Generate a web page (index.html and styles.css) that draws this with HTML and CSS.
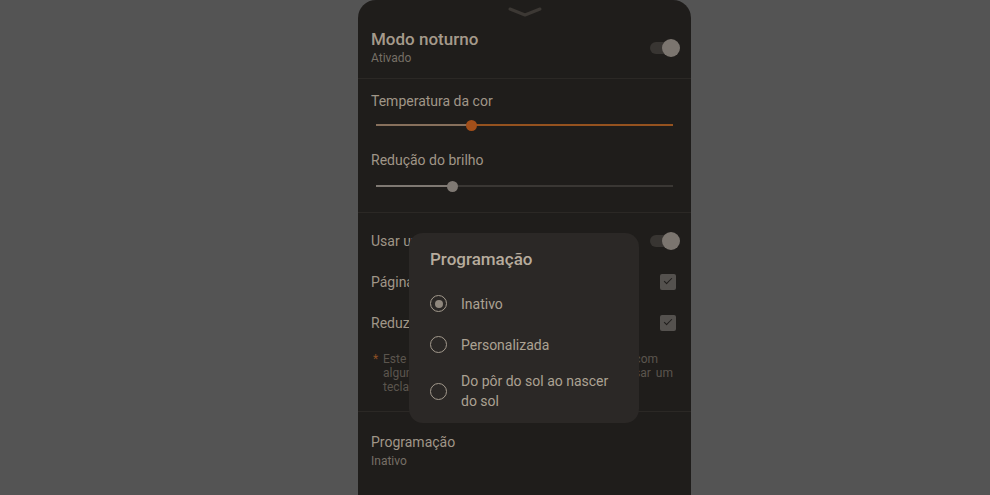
FILE: index.html
```html
<!DOCTYPE html>
<html lang="pt">
<head>
    <meta charset="UTF-8">
    <meta name="viewport" content="width=device-width, initial-scale=1.0">
    <link rel="stylesheet" href="styles.css">
    <title>Modo noturno</title>
</head>
<body>
<div class="sheet">
    <div class="handle">
        <svg width="34" height="10" viewBox="0 0 34 10">
            <polyline points="2,2 17,8 32,2" fill="none" stroke="#3c3834" stroke-width="3" stroke-linecap="round" stroke-linejoin="round"/>
        </svg>
    </div>

    <div class="head">
        <div class="text">
            <div class="title">Modo noturno</div>
            <div class="sub">Ativado</div>
        </div>
        <div class="toggle"><span class="thumb"></span></div>
    </div>

    <div class="sliders">
        <div class="label">Temperatura da cor</div>
        <div class="slider warm">
            <div class="track" style="--pos: 32.3%"><span class="knob"></span></div>
        </div>
        <div class="label gap">Redução do brilho</div>
        <div class="slider dim">
            <div class="track" style="--pos: 25.6%"><span class="knob"></span></div>
        </div>
    </div>

    <div class="options">
        <div class="row">
            <span class="label">Usar um tema escuro</span>
            <div class="toggle"><span class="thumb"></span></div>
        </div>
        <div class="row">
            <span class="label">Páginas web escuras</span>
            <span class="check"></span>
        </div>
        <div class="row">
            <span class="label">Reduzir brilho do papel de parede</span>
            <span class="check"></span>
        </div>
        <div class="note">
            <span class="star">*</span>
            <div class="note-text">
                <span class="line first">Este recurso pode não funcionar com</span>
                <span class="line">alguns aplicativos e jogos. Recomendamos usar um</span>
                <span>teclado escuro.</span>
            </div>
        </div>
    </div>

    <div class="schedule">
        <div class="title-sm">Programação</div>
        <div class="sub">Inativo</div>
    </div>

    <div class="dialog">
        <div class="dialog-title">Programação</div>
        <div class="radio-row">
            <span class="radio on"></span>
            <span>Inativo</span>
        </div>
        <div class="radio-row">
            <span class="radio"></span>
            <span>Personalizada</span>
        </div>
        <div class="radio-row last">
            <span class="radio"></span>
            <span>Do pôr do sol ao nascer<br>do sol</span>
        </div>
    </div>
</div>
</body>
</html>
```

FILE: styles.css
```css
body {
    margin: 0;
    background: #545454;
    font-family: Roboto, "Noto Sans", sans-serif;
    height: 495px;
    overflow: hidden;
}

.sheet {
    position: relative;
    width: 333px;
    height: 495px;
    margin-left: 358px;
    background: #1f1d1b;
    border-radius: 18px 18px 0 0;
}

.handle {
    height: 26px;
    display: flex;
    justify-content: center;
    padding-top: 7px;
    box-sizing: border-box;
}

.head {
    display: flex;
    align-items: center;
    justify-content: space-between;
    padding: 3px 11px 12px 13px;
    border-bottom: 1px solid #2b2825;
}

.title {
    font-size: 17px;
    line-height: 20px;
    font-weight: 500;
    color: #a59a8b;
}

.sub {
    margin-top: 1px;
    font-size: 12px;
    line-height: 16px;
    color: #766f66;
}

.toggle {
    position: relative;
    width: 28px;
    height: 12px;
    border-radius: 6px;
    background: #383532;
    margin-right: 2px;
}

.toggle .thumb {
    position: absolute;
    right: -2px;
    top: -3px;
    width: 18px;
    height: 18px;
    border-radius: 50%;
    background: #7b756f;
}

.sliders {
    padding: 12px 18px 12px 13px;
    border-bottom: 1px solid #2b2825;
}

.label {
    font-size: 14px;
    line-height: 20px;
    color: #a09688;
}

.label.gap {
    margin-top: 11px;
}

.slider {
    height: 28px;
    display: flex;
    align-items: center;
    padding-left: 5px;
}

.slider.dim {
    padding-top: 2px;
}

.track {
    position: relative;
    flex: 1;
    height: 2px;
}

.warm .track {
    background: linear-gradient(to right, #87705c var(--pos), #95521f var(--pos));
}

.dim .track {
    background: linear-gradient(to right, #7f7973 var(--pos), #3a3734 var(--pos));
}

.knob {
    position: absolute;
    left: var(--pos);
    top: -4.5px;
    width: 11px;
    height: 11px;
    margin-left: -5.5px;
    border-radius: 50%;
}

.warm .knob {
    background: #a24f1a;
}

.dim .knob {
    background: #7f7973;
}

.options {
    padding: 7px 0 17px;
    border-bottom: 1px solid #2b2825;
}

.row {
    height: 41px;
    display: flex;
    align-items: center;
    justify-content: space-between;
    padding: 0 11px 0 13px;
}

.check {
    width: 16px;
    height: 16px;
    margin-right: 4px;
    border-radius: 2px;
    background: #54514e;
    position: relative;
}

.check::after {
    content: "";
    position: absolute;
    left: 4px;
    top: 4px;
    width: 7px;
    height: 3px;
    border-left: 1.5px solid #1f1d1b;
    border-bottom: 1.5px solid #1f1d1b;
    transform: rotate(-45deg);
}

.note {
    display: flex;
    margin-top: 9px;
    padding: 0 18px 0 15px;
    font-size: 12px;
    line-height: 14px;
    color: #5b554e;
}

.star {
    width: 10px;
    flex-shrink: 0;
    color: #8c4f24;
}

.note-text {
    flex: 1;
    display: flex;
    flex-direction: column;
}

.line {
    text-align: justify;
    text-align-last: justify;
}

.line.first {
    padding-right: 15px;
}

.schedule {
    padding: 20px 13px 0;
}

.title-sm {
    font-size: 14px;
    line-height: 20px;
    color: #a09688;
}

.dialog {
    position: absolute;
    left: 51px;
    top: 233px;
    width: 230px;
    height: 190px;
    box-sizing: border-box;
    padding: 15px 0 0 21px;
    background: #2b2826;
    border-radius: 14px;
}

.dialog-title {
    font-size: 17px;
    line-height: 22px;
    font-weight: 500;
    color: #b7ac9d;
    margin-bottom: 13px;
}

.radio-row {
    height: 41px;
    display: flex;
    align-items: center;
    gap: 14px;
    font-size: 14px;
    line-height: 20px;
    color: #aca293;
}

.radio-row.last {
    height: auto;
    padding-top: 6px;
}

.radio {
    width: 17px;
    height: 17px;
    box-sizing: border-box;
    border: 1.5px solid #a39a8d;
    border-radius: 50%;
    flex-shrink: 0;
    display: flex;
    align-items: center;
    justify-content: center;
}

.radio.on::after {
    content: "";
    width: 8px;
    height: 8px;
    border-radius: 50%;
    background: #8f877d;
}
```
